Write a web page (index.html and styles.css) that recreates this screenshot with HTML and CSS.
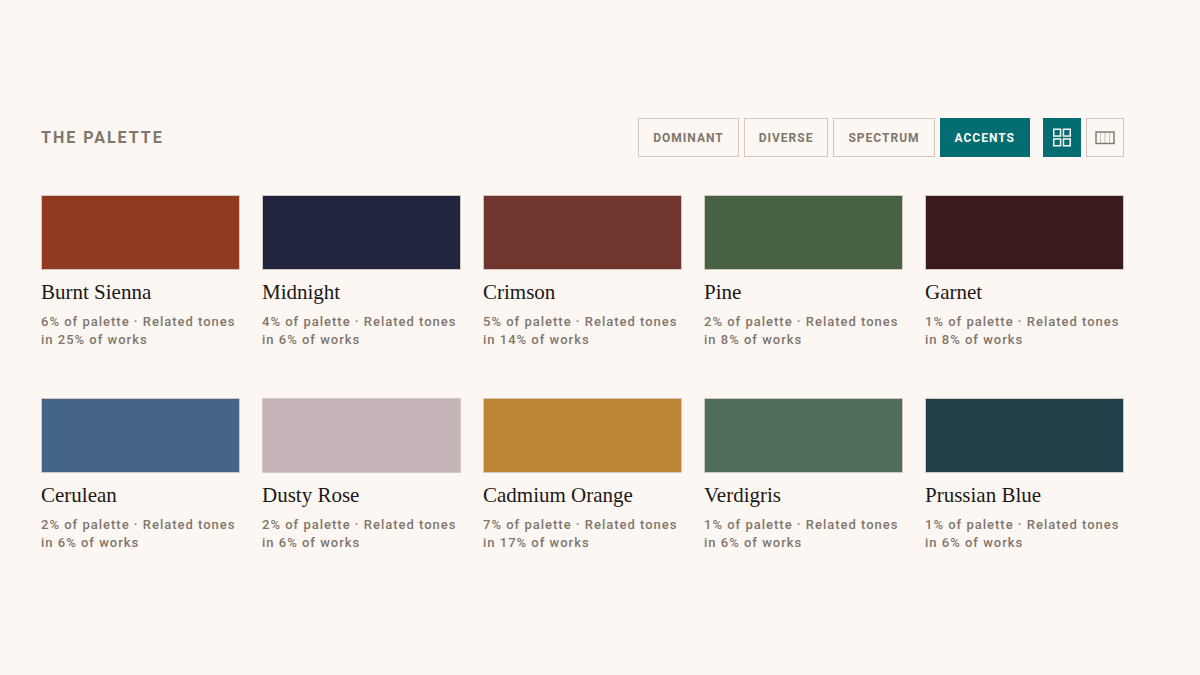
FILE: index.html
```
<!DOCTYPE html>
<html lang="en">
<head>
    <meta charset="UTF-8">
    <meta name="viewport" content="width=device-width, initial-scale=1">
    <title>The Palette</title>
    <link rel="stylesheet" href="styles.css">
</head>
<body>
    <main class="palette">
        <header class="palette-header">
            <h1 class="palette-title">The Palette</h1>
            <div class="controls">
                <div class="btn-group">
                    <button class="btn" type="button">Dominant</button>
                    <button class="btn" type="button">Diverse</button>
                    <button class="btn" type="button">Spectrum</button>
                    <button class="btn active" type="button">Accents</button>
                </div>
                <div class="btn-group">
                    <button class="btn btn-icon active" type="button" aria-label="Grid view">
                        <svg width="20" height="20" viewBox="0 0 20 20" fill="none" stroke="currentColor" stroke-width="1.5">
                            <rect x="1.75" y="1.25" width="6.8" height="6.8"/>
                            <rect x="11.45" y="1.25" width="6.8" height="6.8"/>
                            <rect x="1.75" y="10.95" width="6.8" height="6.8"/>
                            <rect x="11.45" y="10.95" width="6.8" height="6.8"/>
                        </svg>
                    </button>
                    <button class="btn btn-icon" type="button" aria-label="Strip view">
                        <svg width="20" height="20" viewBox="0 0 20 20" fill="none" stroke="currentColor">
                            <path d="M5.5 4v11M10 4v11M14.5 4v11" opacity=".4"/>
                            <rect x="1" y="4" width="18" height="11.5" stroke-width="1.4"/>
                        </svg>
                    </button>
                </div>
            </div>
        </header>

        <div class="swatches">
            <article class="swatch">
                <div class="color burnt-sienna"></div>
                <h2 class="name">Burnt Sienna</h2>
                <p class="meta">6% of palette · Related tones<br>in 25% of works</p>
            </article>
            <article class="swatch">
                <div class="color midnight"></div>
                <h2 class="name">Midnight</h2>
                <p class="meta">4% of palette · Related tones<br>in 6% of works</p>
            </article>
            <article class="swatch">
                <div class="color crimson"></div>
                <h2 class="name">Crimson</h2>
                <p class="meta">5% of palette · Related tones<br>in 14% of works</p>
            </article>
            <article class="swatch">
                <div class="color pine"></div>
                <h2 class="name">Pine</h2>
                <p class="meta">2% of palette · Related tones<br>in 8% of works</p>
            </article>
            <article class="swatch">
                <div class="color garnet"></div>
                <h2 class="name">Garnet</h2>
                <p class="meta">1% of palette · Related tones<br>in 8% of works</p>
            </article>
            <article class="swatch">
                <div class="color cerulean"></div>
                <h2 class="name">Cerulean</h2>
                <p class="meta">2% of palette · Related tones<br>in 6% of works</p>
            </article>
            <article class="swatch">
                <div class="color dusty-rose"></div>
                <h2 class="name">Dusty Rose</h2>
                <p class="meta">2% of palette · Related tones<br>in 6% of works</p>
            </article>
            <article class="swatch">
                <div class="color cadmium-orange"></div>
                <h2 class="name">Cadmium Orange</h2>
                <p class="meta">7% of palette · Related tones<br>in 17% of works</p>
            </article>
            <article class="swatch">
                <div class="color verdigris"></div>
                <h2 class="name">Verdigris</h2>
                <p class="meta">1% of palette · Related tones<br>in 6% of works</p>
            </article>
            <article class="swatch">
                <div class="color prussian-blue"></div>
                <h2 class="name">Prussian Blue</h2>
                <p class="meta">1% of palette · Related tones<br>in 6% of works</p>
            </article>
        </div>
    </main>
</body>
</html>
```

FILE: styles.css
```
* { box-sizing: border-box; }
body {
    margin: 0;
    background: #fcf7f3;
    color: #1b1816;
    font-family: Roboto, "Liberation Sans", sans-serif;
}
h1, h2, p { margin: 0; }

.palette { padding: 118px 76px 40px 41px; }
.palette-header {
    display: flex;
    flex-wrap: wrap;
    align-items: center;
    justify-content: space-between;
    gap: 16px;
    margin-bottom: 38px;
}
.palette-title {
    color: #7f766c;
    font-size: 16px;
    line-height: 20px;
    letter-spacing: 2px;
    text-transform: uppercase;
}

/* filter and view buttons */
.controls {
    display: flex;
    flex-wrap: wrap;
    gap: 13px;
}
.btn-group {
    display: flex;
    gap: 5px;
}
.btn {
    height: 39px;
    padding: 0 14px;
    border: 1px solid #d2c8bf;
    background: transparent;
    color: #7f766c;
    font-family: inherit;
    font-size: 12px;
    font-weight: 700;
    letter-spacing: 1px;
    text-transform: uppercase;
    cursor: pointer;
}
.btn.active {
    border-color: #036d71;
    background: #036d71;
    color: #fcf7f3;
}
.btn-icon {
    display: flex;
    align-items: center;
    justify-content: center;
    width: 38px;
    padding: 0;
}

/* swatches */
.swatches {
    display: grid;
    grid-template-columns: repeat(auto-fit, minmax(190px, 1fr));
    gap: 49px 22px;
}
.color {
    height: 75px;
    border: 1px solid #d2c8bf;
}
.name {
    margin: 10px 0 8px;
    font-family: "Liberation Serif", "Times New Roman", serif;
    font-size: 21px;
    font-weight: 400;
    line-height: 25px;
}
.meta {
    color: #7f766c;
    font-size: 13px;
    font-weight: 500;
    line-height: 18px;
    letter-spacing: 1px;
}

.burnt-sienna { background: #903a1f; }
.midnight { background: #20243f; }
.crimson { background: #70352e; }
.pine { background: #476242; }
.garnet { background: #3a1a1d; }
.cerulean { background: #446488; }
.dusty-rose { background: #c6b5b8; }
.cadmium-orange { background: #bb8734; }
.verdigris { background: #4e6d5a; }
.prussian-blue { background: #22404a; }
```
